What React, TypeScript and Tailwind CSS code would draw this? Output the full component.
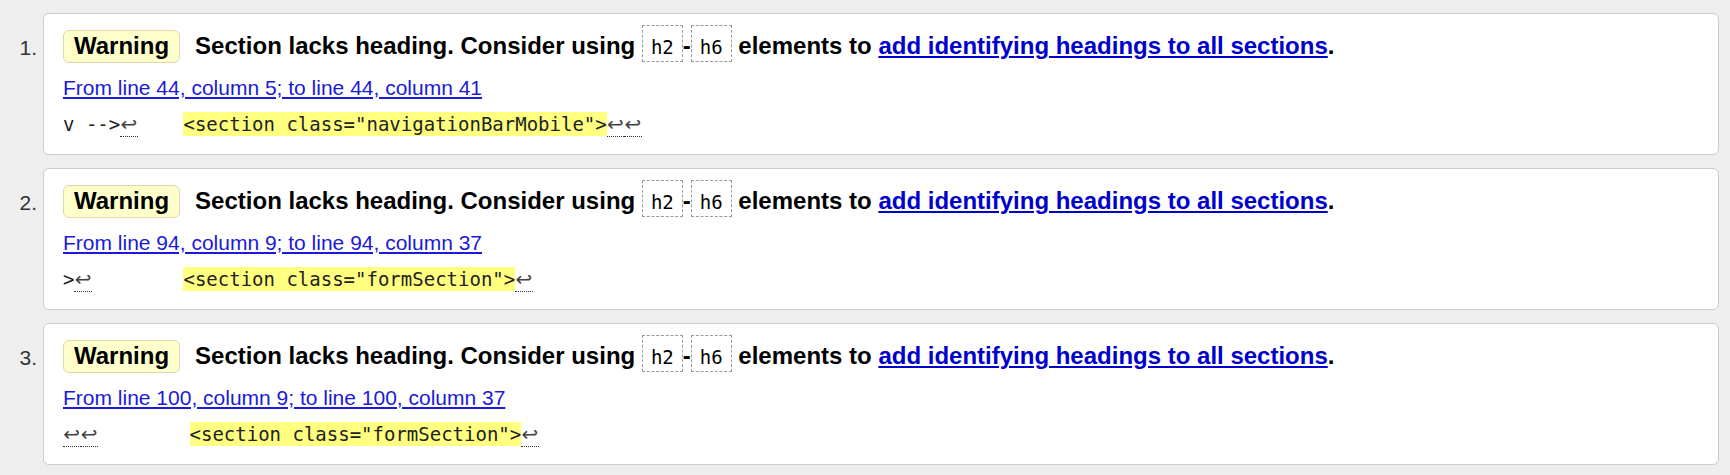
import React from "react";

type Issue = {
  prefix: string;
  leadArrows: number;
  gap: string;
  code: string;
  tailArrows: number;
  location: string;
};

const issues: Issue[] = [
  {
    prefix: "v -->",
    leadArrows: 1,
    gap: "    ",
    code: '<section class="navigationBarMobile">',
    tailArrows: 2,
    location: "From line 44, column 5; to line 44, column 41",
  },
  {
    prefix: ">",
    leadArrows: 1,
    gap: "        ",
    code: '<section class="formSection">',
    tailArrows: 1,
    location: "From line 94, column 9; to line 94, column 37",
  },
  {
    prefix: "",
    leadArrows: 2,
    gap: "        ",
    code: '<section class="formSection">',
    tailArrows: 1,
    location: "From line 100, column 9; to line 100, column 37",
  },
];

const LineBreak: React.FC = () => (
  <span
    title="Line break"
    className="inline-block h-[25px] w-[17.5px] overflow-hidden border-b border-dotted border-[#333] text-center align-top text-[20px] leading-[24px] text-[#444]"
    style={{ fontFamily: '"DejaVu Sans", sans-serif' }}
  >
    ↩
  </span>
);

const Tag: React.FC<{ children: React.ReactNode }> = ({ children }) => (
  <code className="-my-[4px] inline-block border border-dashed border-[#999] px-[8px] pt-[9px] pb-[2px] text-[19px] font-normal leading-[24px] text-black [font-family:'DejaVu_Sans_Mono',monospace]">
    {children}
  </code>
);

const App: React.FC = () => {
  return (
    <div
      className="min-h-screen bg-[#eeeeee] pt-[13px] pr-[11px]"
      style={{ fontFamily: '"Liberation Sans", Arial, sans-serif' }}
    >
      <ol className="flex flex-col gap-[13px]">
        {issues.map((issue, i) => (
          <li key={i} className="flex">
            <div className="w-[43px] shrink-0 pr-[6px] pt-[23px] text-right text-[21px] leading-[24px] text-[#333]">
              {i + 1}.
            </div>

            <div className="flex-1 rounded-[6px] border border-[#cccccc] bg-white px-[19px] pt-[15px] pb-[17px]">
              {/* message */}
              <div className="flex h-[34px] items-center">
                <span className="flex h-[33px] items-center rounded-[6px] border border-[#dcd8a8] bg-[#ffffcc] px-[10px] text-[24px] font-bold text-black">
                  Warning
                </span>
                <p className="ml-[15px] whitespace-nowrap text-[24px] font-bold leading-[34px] text-black">
                  Section lacks heading. Consider using <Tag>h2</Tag>-<Tag>h6</Tag>{" "}
                  elements to{" "}
                  <a href="#" className="text-[#0000cc] underline">
                    add identifying headings to all sections
                  </a>
                  .
                </p>
              </div>

              {/* location */}
              <div className="mt-[11px] text-[21px] leading-[28px]">
                <a href="#" className="text-[#1a1ad8] underline">
                  {issue.location}
                </a>
              </div>

              {/* extract */}
              <div className="mt-[10px] h-[25px] whitespace-pre text-[19px] leading-[24px] text-[#222] [font-family:'DejaVu_Sans_Mono',monospace]">
                <span className="align-top">{issue.prefix}</span>
                {Array.from({ length: issue.leadArrows }).map((_, k) => (
                  <LineBreak key={"a" + k} />
                ))}
                <span className="align-top">{issue.gap}</span>
                <span className="inline-block h-[24px] bg-[#ffff80] align-top">{issue.code}</span>
                {Array.from({ length: issue.tailArrows }).map((_, k) => (
                  <LineBreak key={"b" + k} />
                ))}
              </div>
            </div>
          </li>
        ))}
      </ol>
    </div>
  );
};

export default App;
